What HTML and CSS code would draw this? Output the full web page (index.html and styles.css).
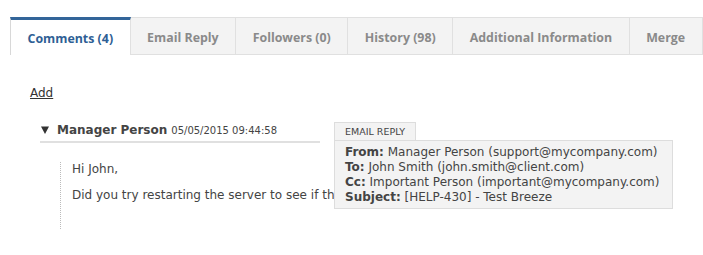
FILE: index.html
```html
<!DOCTYPE html>
<html>
<head>
<meta charset="utf-8">
<link rel="stylesheet" href="styles.css">
</head>
<body>
<div class="tabs">
  <div class="tab active">Comments (4)</div>
  <div class="tab">Email Reply</div>
  <div class="tab">Followers (0)</div>
  <div class="tab">History (98)</div>
  <div class="tab">Additional Information</div>
  <div class="tab">Merge</div>
</div>
<div class="content">
  <a class="add" href="#">Add</a>
  <div class="comment">
    <div class="comment-head">
      <svg class="arrow" width="8" height="8" viewBox="0 0 8 8"><path d="M0 0.5 L8 0.5 L4 8 Z" fill="#333"/></svg>
      <span class="author">Manager Person</span>
      <span class="date">05/05/2015 09:44:58</span>
    </div>
    <div class="comment-body">
      <p>Hi John,</p>
      <p>Did you try restarting the server to see if that fixed the problem?</p>
    </div>
    <div class="email-popup">
      <div class="email-tag">EMAIL REPLY</div>
      <div class="email-info">
        <div><b>From:</b> Manager Person (support@mycompany.com)</div>
        <div><b>To:</b> John Smith (john.smith@client.com)</div>
        <div><b>Cc:</b> Important Person (important@mycompany.com)</div>
        <div><b>Subject:</b> [HELP-430] - Test Breeze</div>
      </div>
    </div>
  </div>
</div>
</body>
</html>
```
FILE: styles.css
```css
* { box-sizing: border-box; }
body {
  margin: 0;
  background: #fff;
  font-family: "DejaVu Sans", Verdana, sans-serif;
  color: #444;
  width: 703px;
  height: 255px;
  overflow: hidden;
}
.tabs {
  display: flex;
  margin: 17px 0 0 10px;
  height: 38px;
}
.tab {
  font-family: "Open Sans", sans-serif;
  font-weight: 700;
  font-size: 12.4px;
  color: #8a8a8a;
  background: #f3f3f3;
  border: 1px solid #e0e0e0;
  border-left: none;
  padding: 2px 16.5px 0;
  display: flex;
  align-items: center;
  white-space: nowrap;
  flex: none;
}
.tab.active {
  background: #fff;
  color: #2f5f95;
  border-top: 3px solid #336599;
  border-left: 1px solid #d8d8d8;
  border-bottom: none;
  border-right: 1px solid #e0e0e0;
  padding-top: 1px;
}
.content {
  padding: 27px 0 0 30px;
}
.add {
  display: inline-block;
  font-size: 12px;
  color: #333;
  text-decoration: underline;
  line-height: 16px;
}
.comment {
  position: relative;
  margin: 22px 0 0 10px;
}
.comment-head {
  width: 280px;
  border-bottom: 2px solid #e0e0e0;
  display: flex;
  align-items: center;
  padding: 0 0 4px 1px;
  height: 20px;
}
.arrow {
  margin-right: 8px;
  flex: none;
}
.author {
  font-weight: 700;
  font-size: 12px;
  color: #444;
  margin-right: 4px;
}
.date {
  font-size: 10px;
  color: #444;
  padding-top: 1px;
}
.comment-body {
  margin: 19px 0 0 20px;
  border-left: 1px dotted #bbb;
  padding: 0 0 14px 11px;
  font-size: 12px;
  color: #444;
}
.comment-body p {
  margin: 0 0 12px;
  line-height: 15px;
}
.comment-body p + p { margin-top: -1px; }
.email-popup {
  position: absolute;
  left: 294px;
  top: -1px;
  font-size: 12px;
}
.email-tag {
  display: inline-block;
  background: #f3f3f3;
  border: 1px solid #ddd;
  border-bottom: none;
  font-size: 9.5px;
  color: #444;
  padding: 0 10px;
  line-height: 18px;
  height: 18px;
}
.email-info {
  background: #f3f3f3;
  border: 1px solid #ddd;
  width: 339px;
  padding: 4px 10px 3px;
  line-height: 15px;
  color: #444;
}
.email-info b { color: #444; }
```
